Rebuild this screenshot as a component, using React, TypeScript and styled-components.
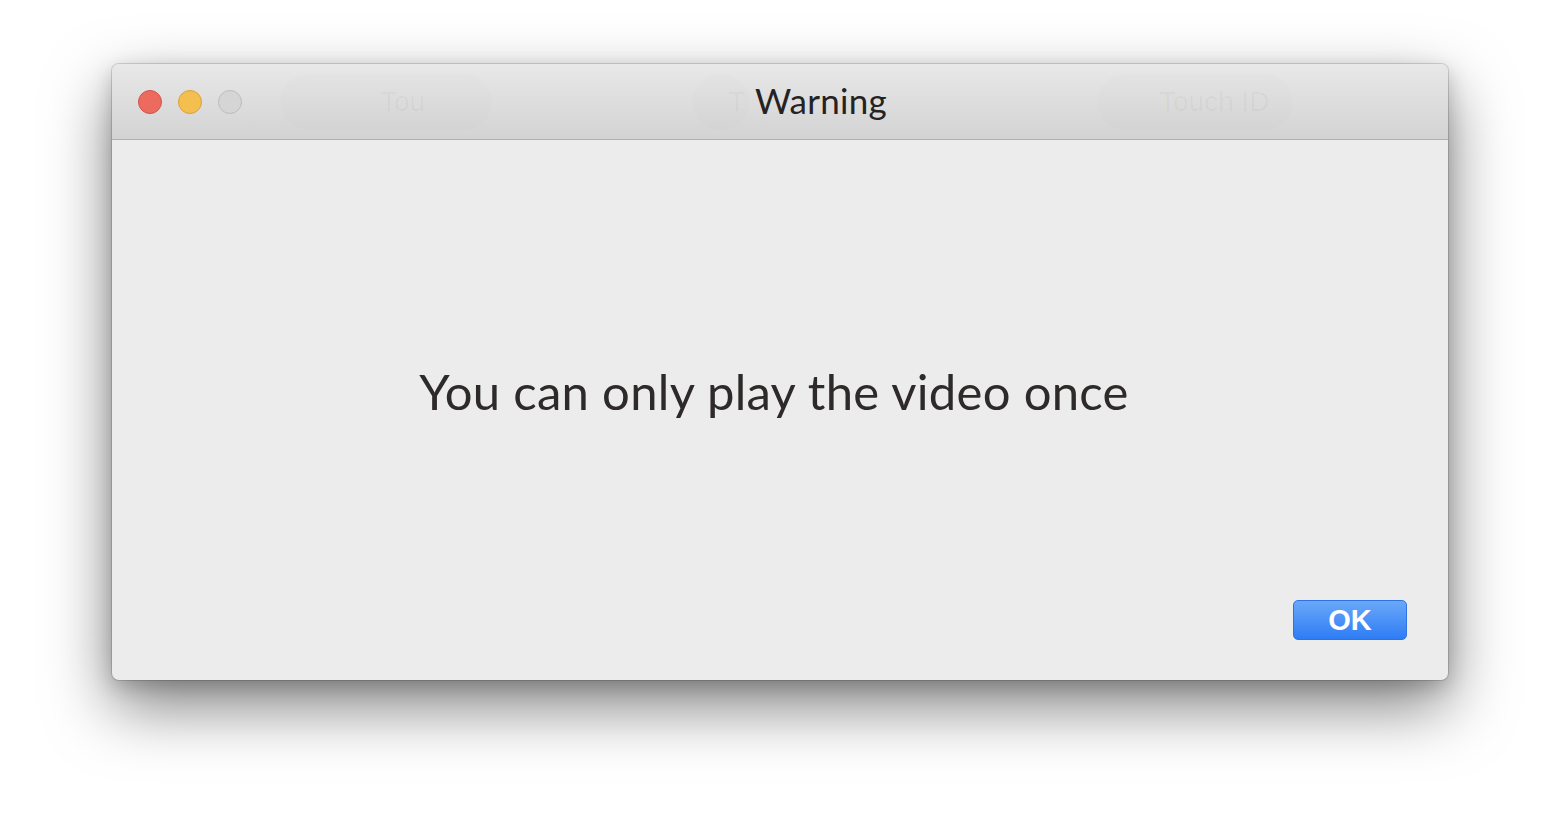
import styled, { createGlobalStyle } from 'styled-components';

const GlobalStyle = createGlobalStyle`
  html, body {
    margin: 0;
    padding: 0;
    background: #ffffff;
  }
  body {
    font-family: 'Lato', 'Open Sans', sans-serif;
  }
`;

const Page = styled.div`
  width: 1560px;
  height: 840px;
  padding: 64px 0 0 112px;
  box-sizing: border-box;
  overflow: hidden;
`;

const Window = styled.div`
  width: 1336px;
  height: 616px;
  display: flex;
  flex-direction: column;
  border-radius: 7px;
  overflow: hidden;
  background: #ececec;
  box-shadow: 0 0 0 1px rgba(0, 0, 0, 0.14), 0 26px 64px rgba(0, 0, 0, 0.5),
    0 6px 20px rgba(0, 0, 0, 0.18);
`;

const TitleBar = styled.div`
  position: relative;
  height: 75px;
  flex-shrink: 0;
  display: flex;
  align-items: center;
  justify-content: center;
  background: linear-gradient(#e8e8e8, #d3d3d3);
  border-bottom: 1px solid #b1b1b1;
`;

const Lights = styled.div`
  position: absolute;
  left: 26px;
  top: 26px;
  display: flex;
  gap: 16px;
`;

const Light = styled.span<{ color: string; edge: string }>`
  width: 24px;
  height: 24px;
  border-radius: 50%;
  box-sizing: border-box;
  background: ${(props) => props.color};
  border: 1px solid ${(props) => props.edge};
`;

// faint, half-faded toolbar pills left behind in the title bar
const Ghost = styled.div<{ left: number; width: number; textLeft: number }>`
  position: absolute;
  top: 10px;
  left: ${(props) => props.left}px;
  width: ${(props) => props.width}px;
  height: 56px;
  border-radius: 28px;
  background: rgba(0, 0, 0, 0.008);
  box-sizing: border-box;
  padding-left: ${(props) => props.textLeft}px;
  display: flex;
  align-items: center;
  font-family: 'Liberation Sans', Arial, sans-serif;
  font-size: 28px;
  color: rgba(0, 0, 0, 0.035);
`;

const Title = styled.h1`
  margin: 0 0 4px 82px;
  font-family: 'Lato', 'Open Sans', sans-serif;
  font-weight: 400;
  font-size: 35px;
  color: #262222;
  letter-spacing: 0.3px;
  position: relative;
`;

const Content = styled.div`
  flex: 1;
  display: flex;
  flex-direction: column;
`;

const Message = styled.div`
  flex: 1;
  display: flex;
  align-items: center;
  justify-content: center;
  padding: 42px 12px 0 0;
  font-family: 'Lato', 'Open Sans', sans-serif;
  font-size: 49px;
  color: #2e2a2a;
  letter-spacing: 0.3px;
`;

const Footer = styled.div`
  display: flex;
  justify-content: flex-end;
  padding: 0 41px 40px 0;
`;

const OkButton = styled.button`
  width: 114px;
  height: 40px;
  border-radius: 5px;
  border: 1px solid #2d72e6;
  background: linear-gradient(#6aa8f9, #2e7cf5);
  color: #ffffff;
  font-family: 'Liberation Sans', Arial, sans-serif;
  font-weight: 700;
  font-size: 29px;
  padding: 0;
  cursor: pointer;
`;

export default function App() {
  return (
    <>
      <GlobalStyle />
      <Page>
        <Window>
          <TitleBar>
            <Lights>
              <Light color="#ed6a5e" edge="#d1544a" />
              <Light color="#f5bf4f" edge="#d9a03c" />
              <Light color="#d5d5d5" edge="#bdbdbd" />
            </Lights>
            <Ghost left={168} width={212} textLeft={100}>Tou</Ghost>
            <Ghost left={580} width={58} textLeft={36}>T</Ghost>
            <Ghost left={985} width={196} textLeft={62}>Touch ID</Ghost>
            <Title>Warning</Title>
          </TitleBar>
          <Content>
            <Message>You can only play the video once</Message>
            <Footer>
              <OkButton>OK</OkButton>
            </Footer>
          </Content>
        </Window>
      </Page>
    </>
  );
}
